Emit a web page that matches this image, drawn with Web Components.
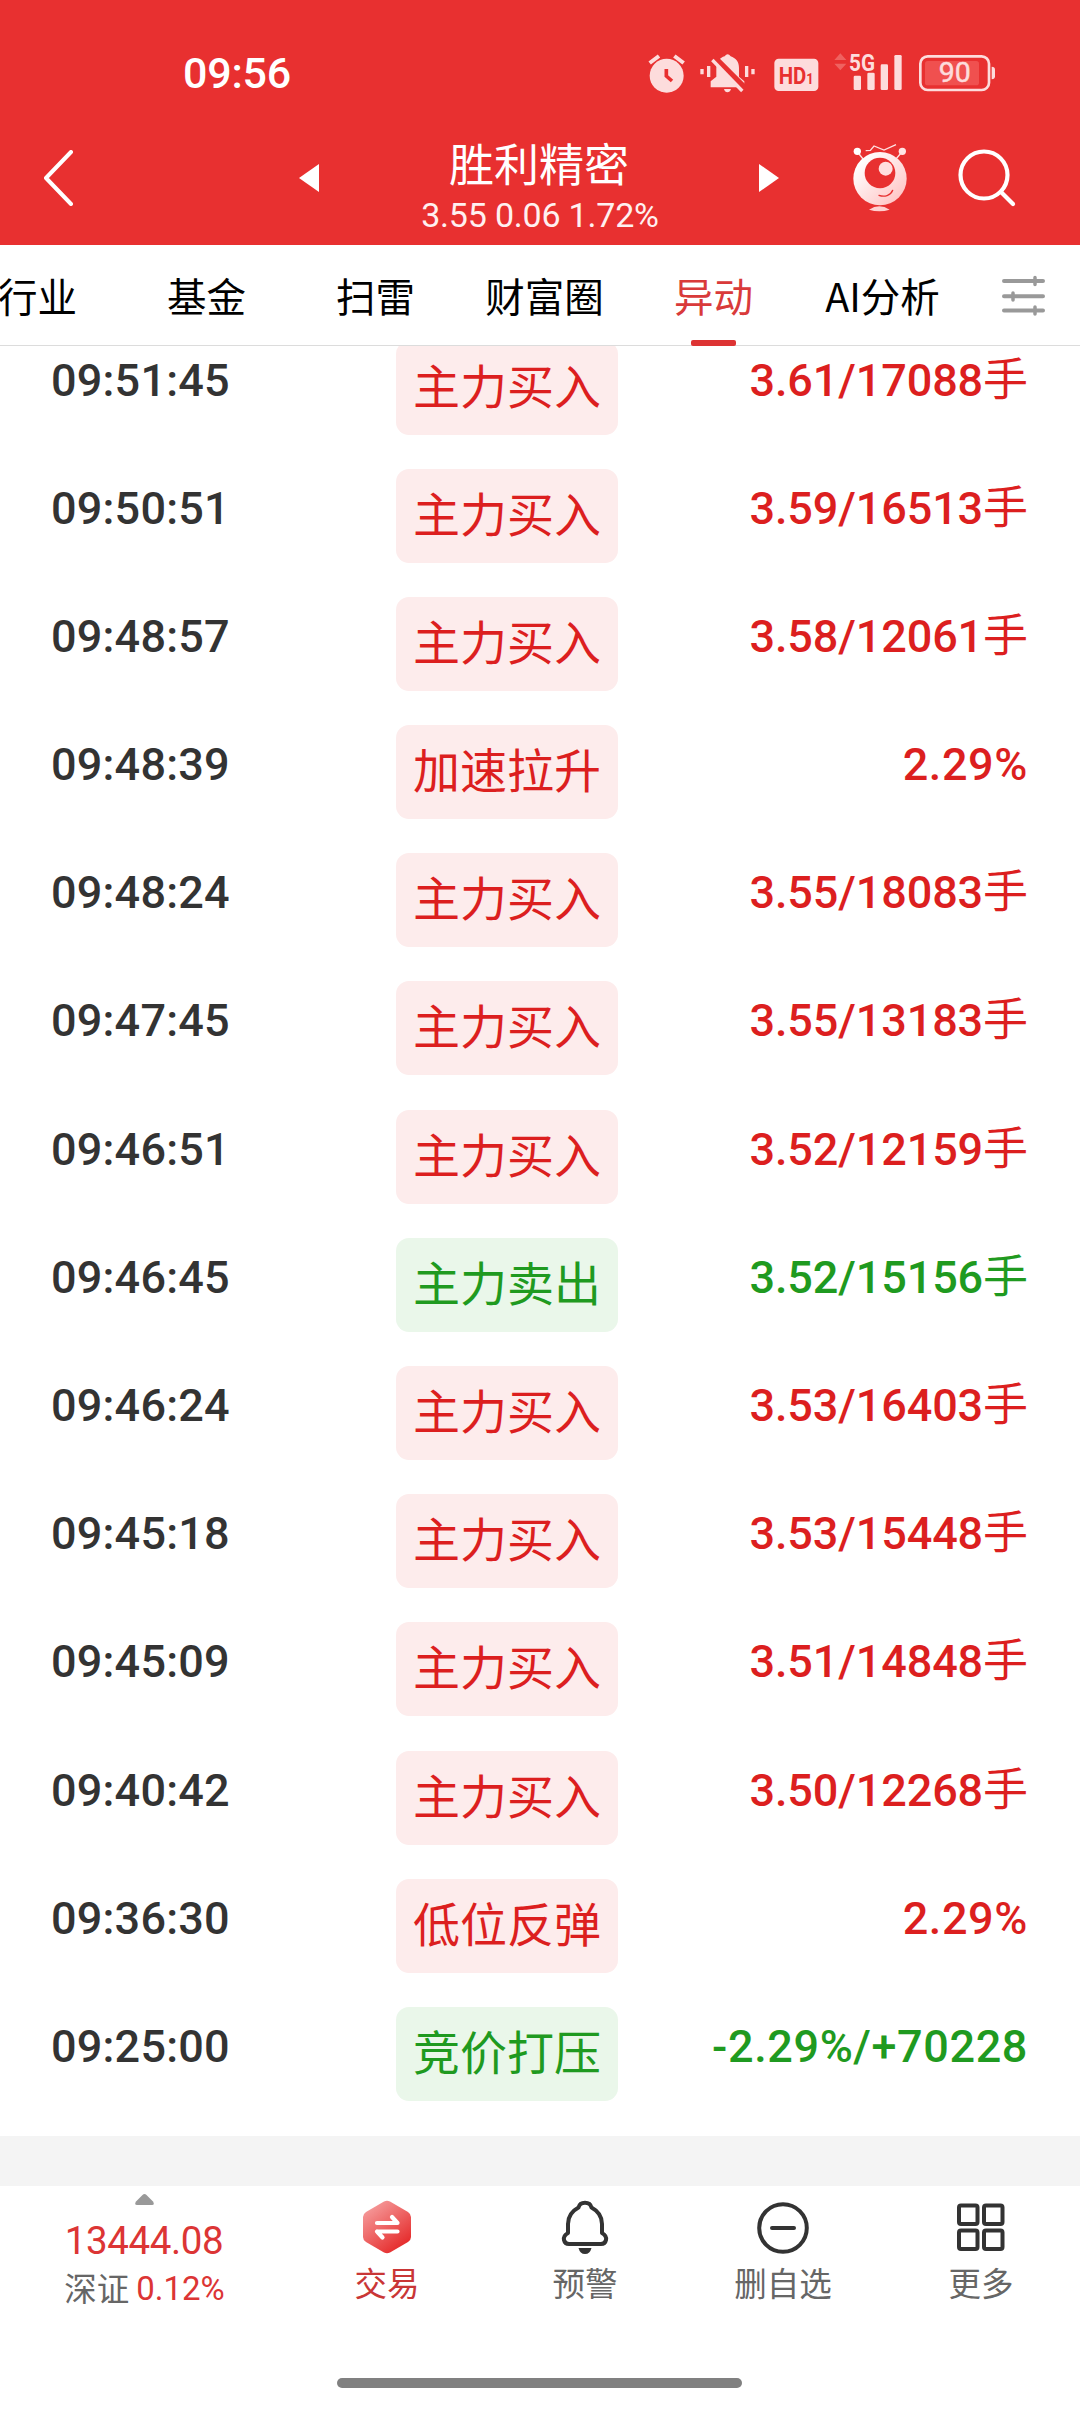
<!DOCTYPE html>
<html lang="zh-CN">
<head>
<meta charset="utf-8">
<title>胜利精密</title>
<style>
  body {
    margin: 0;
    width: 1080px;
    height: 2412px;
    overflow: hidden;
    background: #fff;
    font-family: Roboto, "Noto Sans CJK SC", sans-serif;
  }
</style>
</head>
<body>
<stock-app></stock-app>

<script>
const define = (name, html, setup) => {
  const template = document.createElement("template");
  template.innerHTML = html;
  customElements.define(name, class extends HTMLElement {
    constructor() {
      super();
      this.attachShadow({ mode: "open" });
      this.shadowRoot.appendChild(template.content.cloneNode(true));
    }
    connectedCallback() {
      if (setup) setup(this, this.shadowRoot);
    }
  });
};

define("status-bar", `
  <style>
    :host { display: flex; height: 115px; box-sizing: border-box; padding: 50px 83px 0 183px; color: #fff; justify-content: space-between; }
    .time { font-size: 43px; font-weight: 500; line-height: 47px; letter-spacing: -0.2px; }
    .icons { display: flex; height: 45px; }
    svg { display: block; height: 45px; fill: #fddcdc; overflow: visible; }
    text { font-family: Roboto, sans-serif; }
  </style>
  <span class="time">09:56</span>
  <div class="icons">
    <svg width="50" viewBox="85 60 150 135">
      <circle cx="141" cy="137" r="51"/>
      <path d="M90 99 118 78M164 78 192 99" stroke="#fddcdc" stroke-width="12"/>
      <path d="M140 117V138L157 153" fill="none" stroke="#e83030" stroke-width="11"/>
    </svg>
    <svg width="73.3" viewBox="235 60 220 135">
      <path d="M242 117h10v16h-10zM262 108h10v33h-10zM376 108h10v33h-10zM395 117h10v16h-10z"/>
      <path d="M273 172V154L290 140V113C291 94 301 83 315 79Q324 66 333 79C348 84 358 95 358 113V140L374 154V172Z"/>
      <path d="M313 177H334Q331 187 323 187 316 187 313 177Z"/>
      <path d="M281 82 374 175" stroke="#e83030" stroke-width="22"/>
      <path d="M278 90 368 183" stroke="#fddcdc" stroke-width="10"/>
    </svg>
    <svg width="60.7" viewBox="455 60 182 135">
      <rect x="462" y="86" width="132" height="97" rx="13"/>
      <text x="475" y="161" font-size="73" font-weight="700" fill="#e83030" textLength="105" lengthAdjust="spacingAndGlyphs">HD<tspan font-size="46">1</tspan></text>
    </svg>
    <svg width="84.7" viewBox="637 60 254 135">
      <path d="M644 90 662 70 680 90ZM644 101H680L662 121Z" fill="#ef6260"/>
      <text x="688" y="123" font-size="74" font-weight="700" textLength="78" lengthAdjust="spacingAndGlyphs">5G</text>
      <rect x="702" y="137" width="22" height="43" rx="4"/>
      <rect x="743" y="128" width="22" height="52" rx="4"/>
      <rect x="783" y="103" width="22" height="77" rx="4"/>
      <rect x="824" y="75" width="22" height="105" rx="4"/>
    </svg>
    <svg width="80" viewBox="891 60 240 135">
      <rect x="901" y="79" width="206" height="101" rx="22" fill="none" stroke="#fddcdc" stroke-width="8"/>
      <rect x="915" y="93" width="162" height="73" rx="8" fill="#f0504f"/>
      <path d="M1115 110Q1125 110 1125 119V139Q1125 148 1115 148Z"/>
      <text x="956" y="157" font-size="82" font-weight="400" stroke="#fddcdc" stroke-width="1.500" textLength="96" lengthAdjust="spacingAndGlyphs">90</text>
    </svg>
  </div>
`);

define("stock-header", `
  <style>
    :host { display: block; height: 245px; background: #e83030; color: #fff; }
    nav { display: grid; grid-template-columns: 299px 20px 440px 20px 1fr; align-items: center; height: 125px; }
    .back { padding-left: 43px; }
    svg { display: block; }
    .title { text-align: center; padding-top: 18px; }
    h1 { margin: 0; font: 400 45px/56px "Noto Sans CJK SC", sans-serif; }
    p { margin: 0; font-size: 34px; line-height: 48px; color: #fff0f0; letter-spacing: -0.2px; padding-left: 2px; }
    .tools { display: flex; padding-left: 73px; gap: 50px; align-items: center; }
  </style>
  <status-bar></status-bar>
  <nav>
    <svg class="back" width="31" height="56" viewBox="0 0 31 56" fill="none" stroke="#fff" stroke-width="4" stroke-linecap="round" stroke-linejoin="round"><path d="M28 2 3 28 28 54"/></svg>
    <svg width="20" height="28" viewBox="0 0 20 28" fill="#fff"><path d="M20 0V28L0 14Z"/></svg>
    <div class="title"><h1><slot name="name"></slot></h1><p><slot name="quote"></slot></p></div>
    <svg width="20" height="28" viewBox="0 0 20 28" fill="#fff"><path d="M0 0V28L20 14Z"/></svg>
    <div class="tools">
      <svg width="56" height="70" viewBox="395 68 168 210">
        <defs><linearGradient id="face" x1="0" y1="0" x2="1" y2="1"><stop offset=".15" stop-color="#fff"/><stop offset="1" stop-color="#ffbcbc"/></linearGradient></defs>
        <path d="M436 91 450 90 461 77 491 89 527 73M414 98 428 116M542 98 527 116" fill="none" stroke="#ffe0e0" stroke-width="4"/>
        <circle cx="411" cy="93" r="11" fill="#fff"/><circle cx="546" cy="93" r="11" fill="#ffe4e4"/>
        <circle cx="479" cy="175" r="80" fill="url(#face)"/>
        <circle cx="479" cy="158" r="46" fill="#e83030"/>
        <circle cx="496" cy="145" r="21" fill="#ffdede"/>
        <path d="M476 225C492 231 511 226 517 210" fill="none" stroke="#e83030" stroke-width="4" stroke-linecap="round"/>
        <path d="M446 268Q477 248 508 268 477 277 446 268Z" fill="#ffd0d0"/>
      </svg>
      <svg width="58" height="58" viewBox="0 0 58 58" fill="none" stroke="#fff" stroke-width="4.2" stroke-linecap="round"><circle cx="26" cy="26" r="23.5"/><path d="M43 43 55 55"/></svg>
    </div>
  </nav>
`);

define("tab-item", `
  <style>
    :host { display: flex; flex: 0 0 169px; height: 101px; position: relative; justify-content: center; align-items: center; font: 400 39.500px/58px "Noto Sans CJK SC", sans-serif; color: #000; }
    :host([active]) { color: #d93a3a; }
    :host([active])::after { content: ""; position: absolute; bottom: 0; left: 62px; width: 45px; height: 6px; border-radius: 2px; background: #dd3333; }
    span { white-space: nowrap; padding-bottom: 2px; }
  </style>
  <span><slot></slot></span>
`);

define("tab-strip", `
  <style>
    :host { display: flex; height: 101px; box-shadow: inset 0 -1px #dcdcdc; overflow: hidden; align-items: center; background: #fff; }
    .tabs { display: flex; margin-left: -47px; }
    svg { margin-left: 35px; margin-bottom: 2px; flex: none; }
  </style>
  <div class="tabs"><slot></slot></div>
  <svg width="43" height="42" viewBox="0 0 43 42" fill="none" stroke="#999" stroke-width="4" stroke-linecap="round">
    <path d="M2 7H41M2 22.300H41M2 36.500H41" />
    <path d="M33 3.500V10.500M11 19V26M33 33V40" stroke-width="3.500"/>
  </svg>
`);

define("move-row", `
  <style>
    :host { --tone: #dc1f1f; --soft: #fdecec; display: grid; grid-template-columns: 396px 222px 1fr; height: 128.200px; align-items: center; padding: 0 52px 0 0; }
    :host([sell]) { --tone: #1f9a20; --soft: #eaf7ea; }
    .time, .value { font-size: 45px; line-height: 60px; font-weight: 500; padding-bottom: 14px; }
    .time { padding-left: 51px; color: #333; letter-spacing: 0.2px; }
    .value { text-align: right; color: var(--tone); white-space: nowrap; letter-spacing: 0.6px; }
    :host([unit]) .value { letter-spacing: -0.1px; }
    .value span { font-family: "Noto Sans CJK SC", sans-serif; font-weight: 400; line-height: 1; }
    .badge { height: 94px; border-radius: 13px; background: var(--soft); color: var(--tone); text-align: center; font: 400 47px/86px "Noto Sans CJK SC", sans-serif; }
  </style>
  <div class="time"></div>
  <div class="badge"><slot></slot></div>
  <div class="value"></div>
`, (el, root) => {
  root.querySelector(".time").textContent = el.getAttribute("time");
  const value = root.querySelector(".value");
  value.textContent = el.getAttribute("value");
  if (el.hasAttribute("unit")) {
    const unit = document.createElement("span");
    unit.textContent = el.getAttribute("unit");
    value.appendChild(unit);
  }
});

const moves = [
  ["09:51:45", "主力买入", "3.61/17088", "手"],
  ["09:50:51", "主力买入", "3.59/16513", "手"],
  ["09:48:57", "主力买入", "3.58/12061", "手"],
  ["09:48:39", "加速拉升", "2.29%"],
  ["09:48:24", "主力买入", "3.55/18083", "手"],
  ["09:47:45", "主力买入", "3.55/13183", "手"],
  ["09:46:51", "主力买入", "3.52/12159", "手"],
  ["09:46:45", "主力卖出", "3.52/15156", "手", true],
  ["09:46:24", "主力买入", "3.53/16403", "手"],
  ["09:45:18", "主力买入", "3.53/15448", "手"],
  ["09:45:09", "主力买入", "3.51/14848", "手"],
  ["09:40:42", "主力买入", "3.50/12268", "手"],
  ["09:36:30", "低位反弹", "2.29%"],
  ["09:25:00", "竞价打压", "-2.29%/+70228", "", true]
];

// the list is scrolled, so the first row starts above the visible area
define("move-list", `
  <style>
    :host { display: block; height: 1790px; overflow: hidden; border-bottom: 50px solid #f4f4f4; }
    .rows { margin-top: -22.600px; }
  </style>
  <div class="rows"></div>
`, (el, root) => {
  const rows = root.querySelector(".rows");
  moves.forEach(([time, label, value, unit, sell]) => {
    const row = document.createElement("move-row");
    row.setAttribute("time", time);
    row.setAttribute("value", value);
    if (unit) row.setAttribute("unit", unit);
    if (sell) row.setAttribute("sell", "");
    row.textContent = label;
    rows.appendChild(row);
  });
});

define("index-quote", `
  <style>
    :host { display: flex; flex-direction: column; align-items: center; width: 288px; padding-top: 8px; box-sizing: border-box; color: #dc3535; }
    svg { display: block; }
    .price { font-size: 38.500px; line-height: 46px; margin-top: 13px; letter-spacing: -0.4px; }
    .change { font-size: 33px; line-height: 48px; display: flex; gap: 7px; margin-top: 1px; padding-left: 1px; }
    .change span { font: 400 32.500px/44px "Noto Sans CJK SC", sans-serif; color: #666; }
  </style>
  <svg width="19" height="11" viewBox="0 0 19 11" fill="#999"><path d="M7.500 1Q9.500-1 11.500 1L18 7.500Q20 11 17 11H2Q-1 11 1 7.500Z"/></svg>
  <div class="price">13444.08</div>
  <div class="change"><span>深证</span>0.12%</div>
`);

define("tool-item", `
  <style>
    :host { display: flex; flex-direction: column; align-items: center; width: 198.500px; padding-top: 13px; box-sizing: border-box; color: #666; font: 400 32.500px/46px "Noto Sans CJK SC", sans-serif; }
    :host([primary]) { color: #c93636; }
    .label { margin-top: 4px; }
    ::slotted(svg) { display: block; }
  </style>
  <slot name="icon"></slot>
  <div class="label"><slot></slot></div>
`);

define("tool-bar", `
  <style>
    :host { display: block; height: 226px; background: #fff; }
    .items { display: flex; height: 192px; }
    index-quote { flex: none; }
    .home { width: 405px; height: 10px; border-radius: 5px; background: #808080; margin-left: 337px; }
  </style>
  <div class="items">
    <index-quote></index-quote>
    <tool-item primary>
      <svg slot="icon" width="56" height="56" viewBox="0 0 56 56">
        <defs><linearGradient id="hex" x1=".1" y1="0" x2=".8" y2="1"><stop offset="0" stop-color="#f7a5a5"/><stop offset=".9" stop-color="#e63030"/></linearGradient></defs>
        <path d="M25 2.500Q28 1 31 2.500L49 13Q52 15 52 18V38Q52 41 49 43L31 53.500Q28 55 25 53.500L7 43Q4 41 4 38V18Q4 15 7 13Z" fill="url(#hex)"/>
        <path d="M18 24H38.500L33 18M38.500 32.500H18M18 32.500H38.500M18 32.500 23.500 38.500" fill="none" stroke="#fff" stroke-width="4.200" stroke-linecap="round" stroke-linejoin="round"/>
      </svg>
      交易
    </tool-item>
    <tool-item>
      <svg slot="icon" width="56" height="56" viewBox="0 0 56 56">
        <path d="M21.500 8.500C23 2 33 2 34.500 8.500C42 12.500 45 18.500 45 25V34C52 38 49 45 44 45H12C7 45 4 38 11 34V25C11 18.500 14 12.500 21.500 8.500Z" fill="none" stroke="#333" stroke-width="4" stroke-linejoin="round"/>
        <path d="M21.500 49H34.500Q33 55 28 55T21.500 49Z" fill="#333"/>
      </svg>
      预警
    </tool-item>
    <tool-item>
      <svg slot="icon" width="56" height="56" viewBox="0 0 56 56" fill="none" stroke="#333" stroke-width="4" stroke-linecap="round">
        <circle cx="28" cy="29" r="23.800"/><path d="M17 29H39"/>
      </svg>
      删自选
    </tool-item>
    <tool-item>
      <svg slot="icon" width="56" height="56" viewBox="0 0 56 56" fill="none" stroke="#333" stroke-width="4">
        <rect x="6" y="6.500" width="18.500" height="18.500" rx="2"/><rect x="31" y="6.500" width="18.500" height="18.500" rx="2"/>
        <rect x="6" y="31.500" width="18.500" height="18.500" rx="2"/><rect x="31" y="31.500" width="18.500" height="18.500" rx="2"/>
      </svg>
      更多
    </tool-item>
  </div>
  <div class="home"></div>
`);

define("stock-app", `
  <style>
    :host { display: flex; flex-direction: column; width: 1080px; height: 2412px; }
  </style>
  <stock-header>
    <span slot="name">胜利精密</span>
    <span slot="quote">3.55 0.06 1.72%</span>
  </stock-header>
  <tab-strip>
    <tab-item>行业</tab-item>
    <tab-item>基金</tab-item>
    <tab-item>扫雷</tab-item>
    <tab-item>财富圈</tab-item>
    <tab-item active>异动</tab-item>
    <tab-item>AI分析</tab-item>
  </tab-strip>
  <move-list></move-list>
  <tool-bar></tool-bar>
`);
</script>
</body>
</html>
